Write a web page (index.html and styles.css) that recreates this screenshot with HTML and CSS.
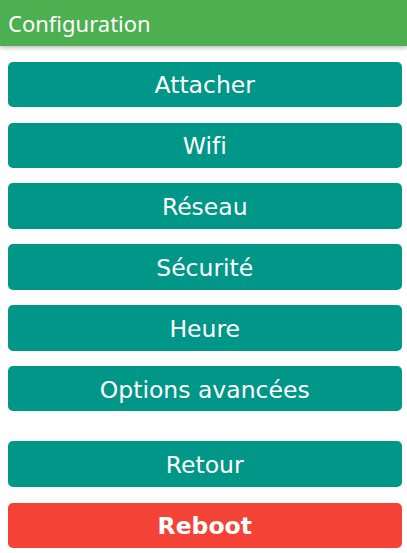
FILE: index.html
```html
<!DOCTYPE html>
<html lang="fr">
<head>
<meta charset="utf-8">
<title>Configuration</title>
<link rel="stylesheet" href="styles.css">
</head>
<body>
<header class="topbar">Configuration</header>
<main class="menu">
  <div class="group">
    <button class="btn">Attacher</button>
    <button class="btn">Wifi</button>
    <button class="btn">Réseau</button>
    <button class="btn">Sécurité</button>
    <button class="btn">Heure</button>
    <button class="btn">Options avancées</button>
  </div>
  <div class="group group-bottom">
    <button class="btn">Retour</button>
    <button class="btn btn-danger">Reboot</button>
  </div>
</main>
</body>
</html>
```
FILE: styles.css
```css
html, body {
  margin: 0;
  padding: 0;
  background: #ffffff;
}
.topbar {
  height: 46px;
  box-sizing: border-box;
  padding-left: 8px;
  background: #4caf50;
  color: #ffffff;
  font-family: "Noto Sans", sans-serif;
  font-size: 22px;
  line-height: 46px;
  box-shadow: 0 2px 4px rgba(0,0,0,0.25);
  position: relative;
}
.menu {
  padding: 15.7px 5px 0 7.5px;
  display: flex;
  flex-direction: column;
  gap: 30px;
}
.group {
  display: flex;
  flex-direction: column;
  gap: 15.6px;
}
.btn {
  display: block;
  width: 100%;
  height: 45.3px;
  margin: 0;
  padding: 2px 0 0 0;
  border: none;
  border-radius: 5px;
  background: #009688;
  color: #ffffff;
  font-family: "DejaVu Sans", Verdana, sans-serif;
  font-size: 23.5px;
  font-variant-ligatures: none;
  text-align: center;
}
.group-bottom {
  gap: 16px;
}
.btn-danger {
  background: #f44336;
  font-weight: bold;
}
```
